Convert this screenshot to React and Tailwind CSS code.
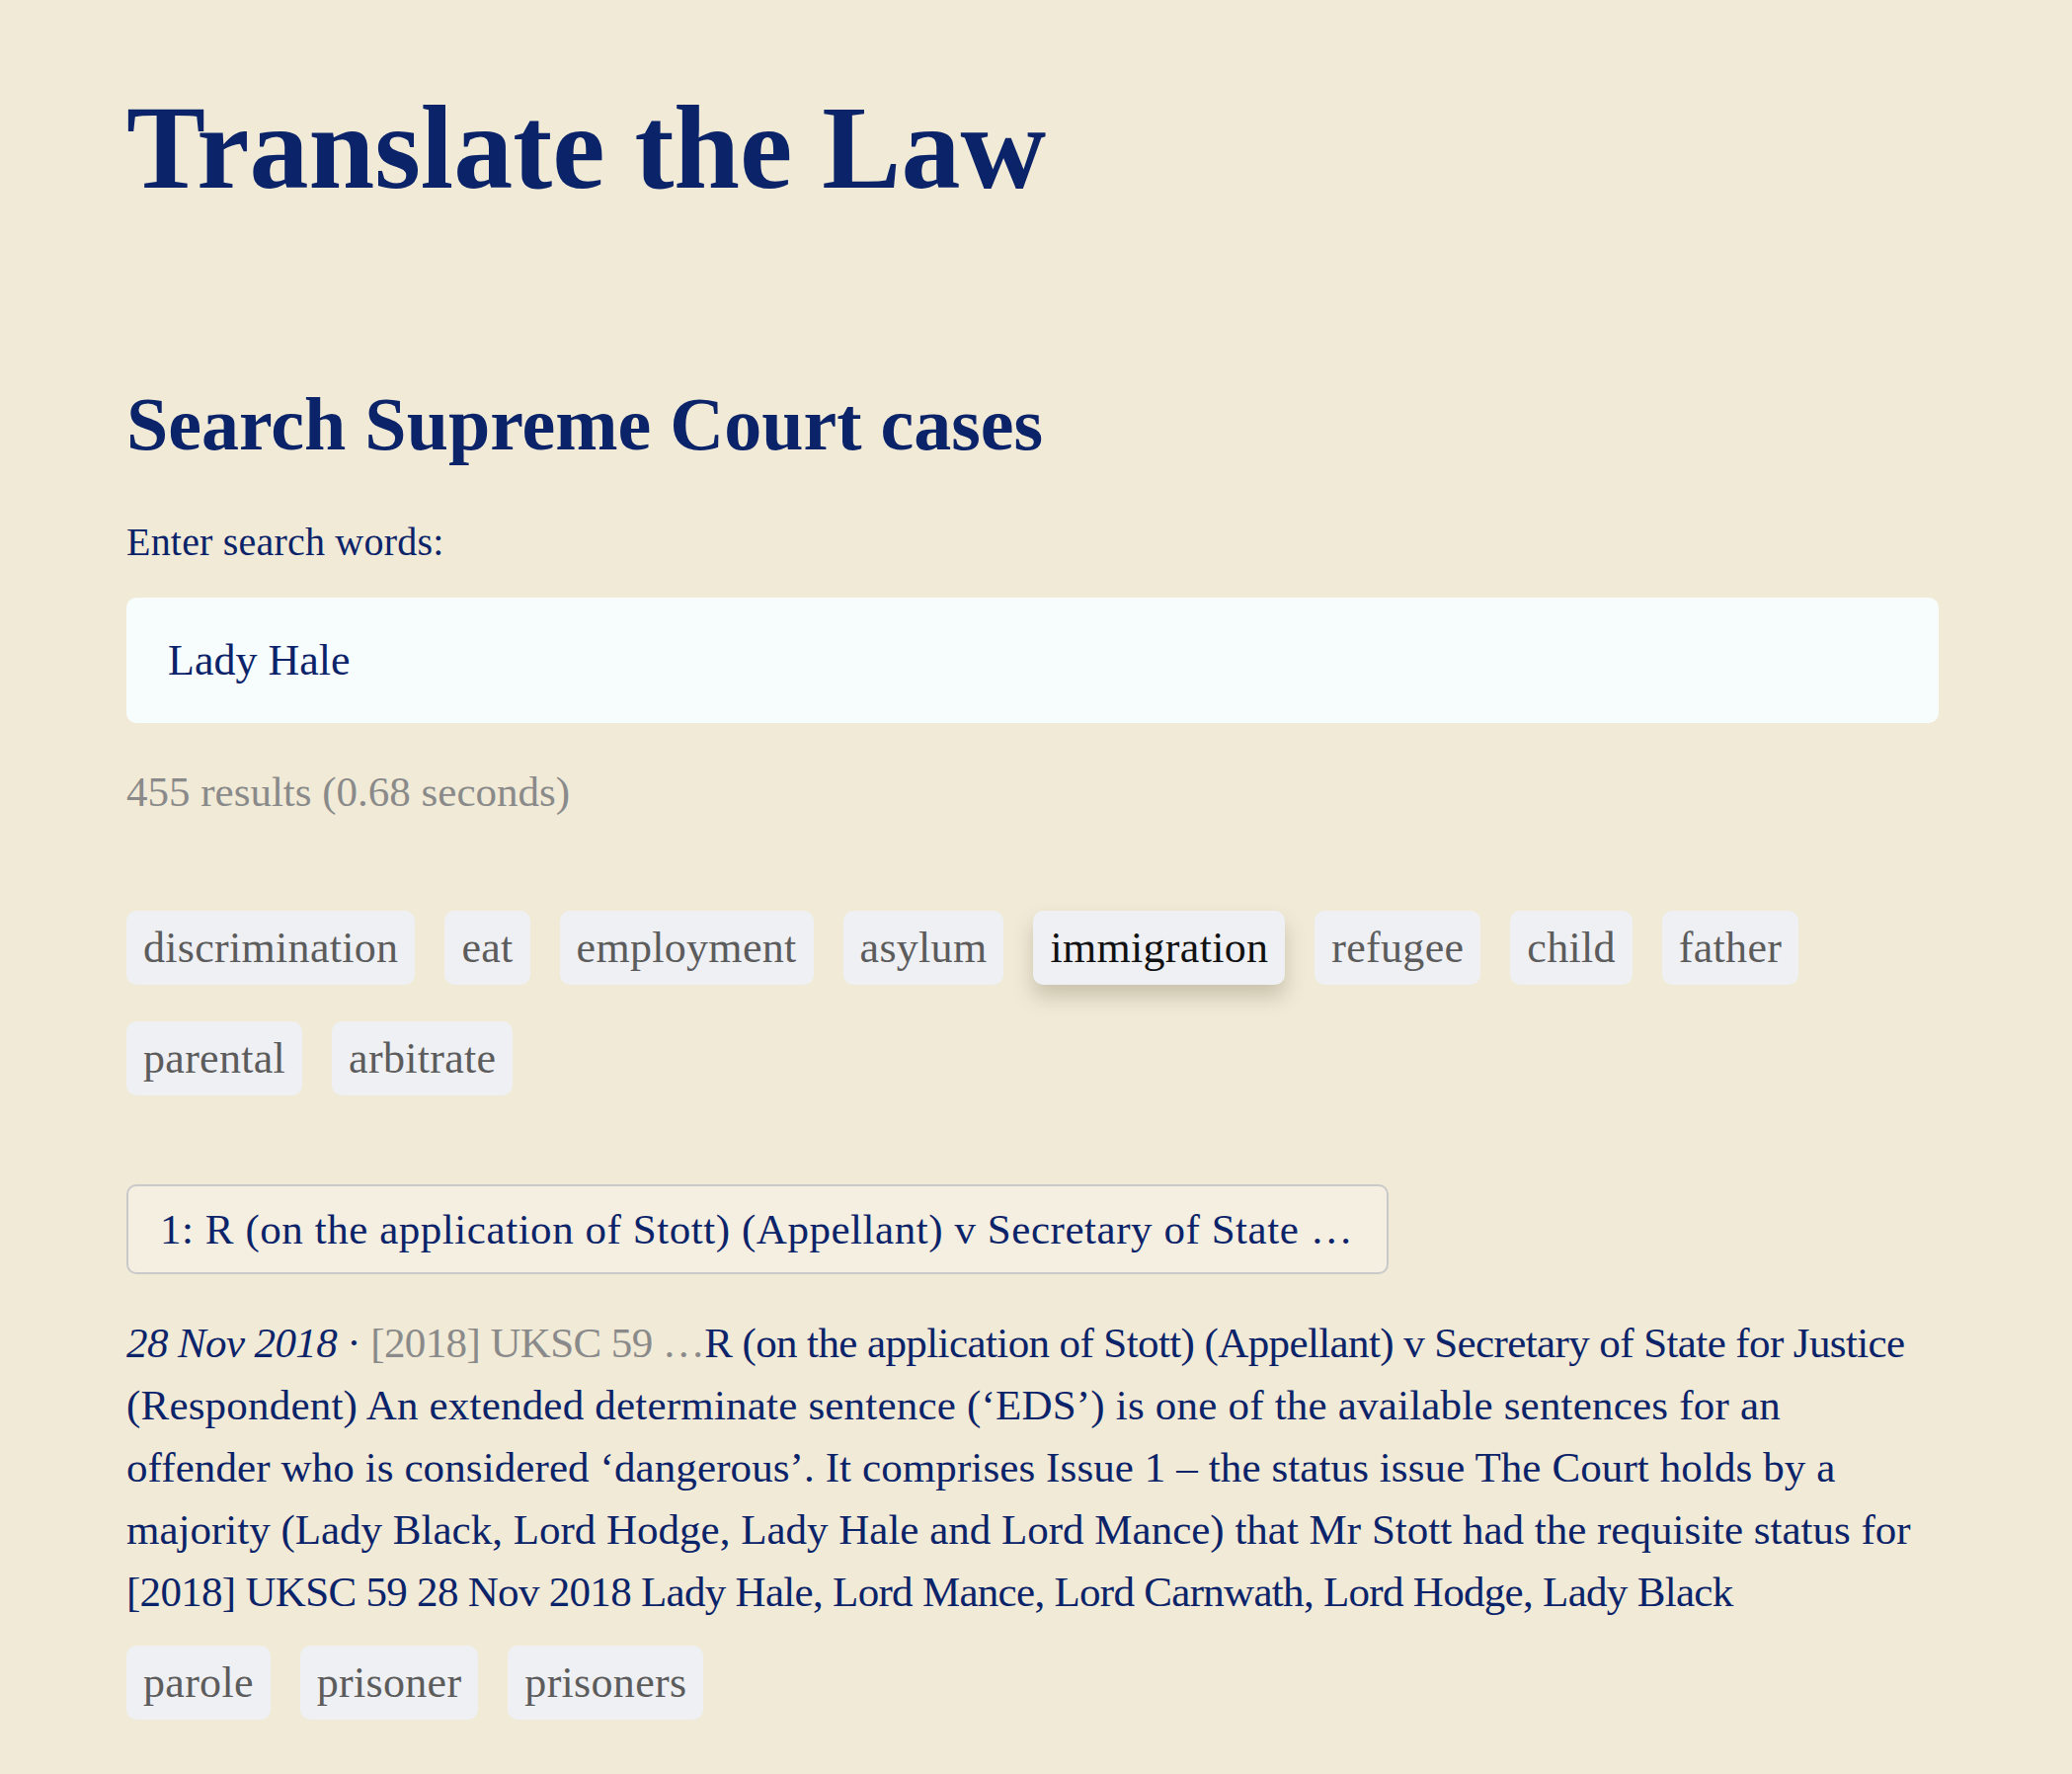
const topTags = [
  "discrimination",
  "eat",
  "employment",
  "asylum",
  "immigration",
  "refugee",
  "child",
  "father",
  "parental",
  "arbitrate",
]

const caseTags = ["parole", "prisoner", "prisoners"]

const Tag = ({ label, active }) => (
  <span
    className={`flex h-[75px] items-center rounded-[10px] bg-[#eff0f4] px-[17px] text-[44px] leading-[44px] tracking-[0.3px] ${
      active
        ? "text-[#111111] shadow-[0_12px_20px_rgba(90,80,50,0.26)]"
        : "text-[#5c5c5c]"
    }`}>
    {label}
  </span>
)

const App = () => {
  return (
    <div className="min-h-screen bg-[#f1ead7] pl-[128px] font-['Liberation_Serif',serif] text-[#0b2369]">
      <div className="w-[1835px] pb-[55px] pt-[90px]">
        <h1 className="text-[120px] font-bold leading-[120px]">
          Translate the Law
        </h1>

        <h2 className="mt-[181px] text-[76px] font-bold leading-[76px]">
          Search Supreme Court cases
        </h2>

        <label
          htmlFor="search"
          className="mt-[62px] block text-[40px] leading-[40px] tracking-[0.2px]">
          Enter search words:
        </label>
        <div className="mt-[36px] flex h-[127px] items-center rounded-[10px] bg-[#f7fdfd] px-[42px]">
          <input
            id="search"
            type="text"
            defaultValue="Lady Hale"
            className="w-full bg-transparent text-[44px] leading-[44px] text-[#0b2369] outline-none"
          />
        </div>

        <p className="mt-[48px] text-[43px] leading-[43px] text-[#8a8a8a]">
          455 results (0.68 seconds)
        </p>

        {/* Related search words */}
        <div className="mt-[99px] flex flex-wrap gap-x-[30px] gap-y-[37px]">
          {topTags.map((tag) => (
            <Tag key={tag} label={tag} active={tag === "immigration"} />
          ))}
        </div>

        {/* Result 1 */}
        <button className="mt-[90px] flex h-[91px] w-[1278px] items-center rounded-[10px] border-2 border-[#c9c9c9] bg-[#f4efe1] px-[32px] text-left text-[43px] leading-[43px] tracking-[0.55px] text-[#0b2369]">
          1: R (on the application of Stott) (Appellant) v Secretary of State …
        </button>

        <p className="mt-[38px] whitespace-nowrap text-[43px] leading-[63px]">
          <span className="tracking-[-0.6px]">
            <i>28 Nov 2018</i> ·{" "}
            <span className="text-[#8a8a8a]">[2018] UKSC 59 …</span>R (on the
            application of Stott) (Appellant) v Secretary of State for Justice
          </span>
          <br />
          <span className="tracking-[0.2px]">
            (Respondent) An extended determinate sentence (‘EDS’) is one of the
            available sentences for an
          </span>
          <br />
          <span className="tracking-[0.1px]">
            offender who is considered ‘dangerous’. It comprises Issue 1 – the
            status issue The Court holds by a
          </span>
          <br />
          majority (Lady Black, Lord Hodge, Lady Hale and Lord Mance) that Mr
          Stott had the requisite status for
          <br />
          <span className="tracking-[-0.7px]">
            [2018] UKSC 59 28 Nov 2018 Lady Hale, Lord Mance, Lord Carnwath,
            Lord Hodge, Lady Black
          </span>
        </p>

        <div className="mt-[23px] flex gap-x-[30px]">
          {caseTags.map((tag) => (
            <Tag key={tag} label={tag} />
          ))}
        </div>
      </div>
    </div>
  )
}

export default App
